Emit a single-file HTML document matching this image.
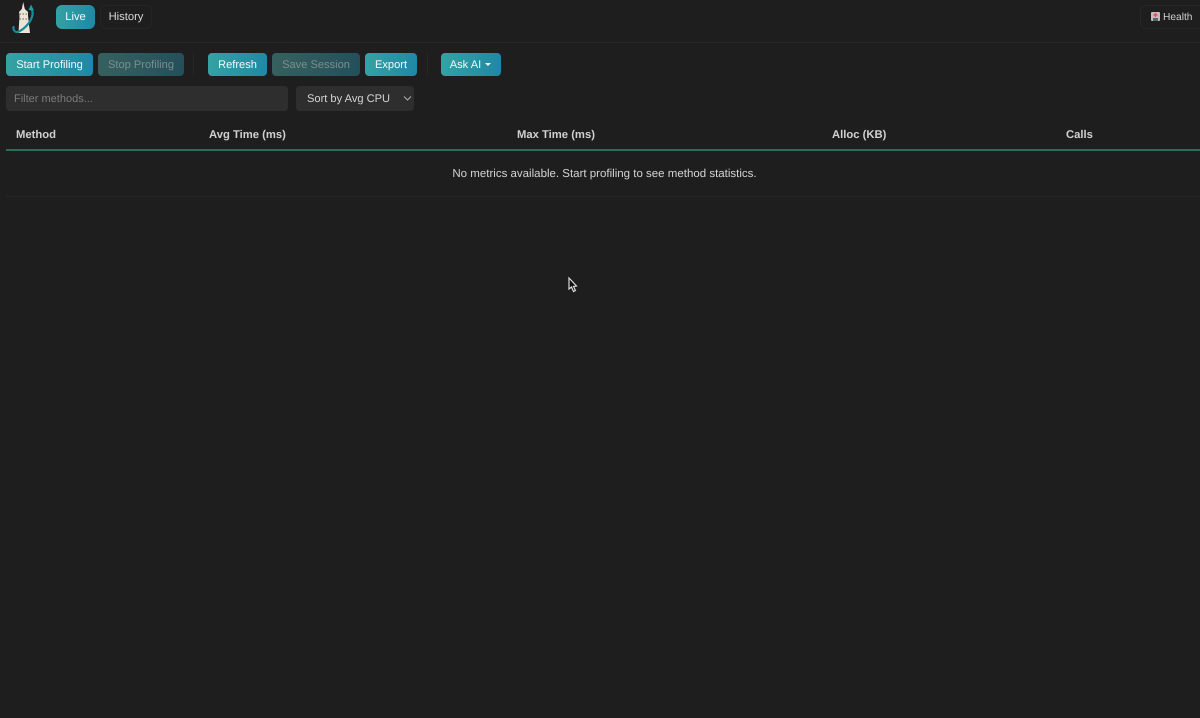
<!DOCTYPE html>
<html lang="en"><head><meta charset="utf-8"><title>Profiler</title>
<style>
html,body{margin:0;padding:0;width:1200px;height:718px;overflow:hidden;background:#1e1e1e;font-family:"Liberation Sans",sans-serif;color:#ddd;text-rendering:geometricPrecision}
#w{position:absolute;left:0;top:0;width:1200px;height:718px;overflow:hidden;filter:blur(.3px)}
.a{position:absolute;white-space:nowrap}
.btn{position:absolute;top:53px;height:23px;border-radius:4px;background:linear-gradient(100deg,#35a3a3,#1f87a5);color:#f4f8f8;font-size:11.1px;line-height:24px;text-align:center;}
.dis{background:linear-gradient(100deg,#37615f,#234f5c);color:#7d8d8d}
.sep{position:absolute;top:52px;width:1px;height:24px;background:#262626}
.th{position:absolute;top:128px;font-size:11.25px;font-weight:bold;color:#d0d0d0;line-height:14px}
</style></head><body><div id="w">
<div class="a" style="left:0;top:42px;width:1200px;height:1px;background:#272727"></div>
<svg class="a" style="left:10px;top:1px" width="28" height="36" viewBox="0 0 28 36">
<path d="M13.2 1 L14.8 8 L18 11 L18 15 L20 32 L8.5 32 L9.5 15 L9 11 L11.8 8 Z" fill="#ece4d8"/>
<path d="M9.5 13H17.5M9.5 18H18" stroke="#6a645b" stroke-width="1" stroke-dasharray="1.5 1.5" fill="none"/>
<path d="M3.5 26 C3 30 6 32 9 30.5 C15 27.5 21 21 22.5 14 C23 11 22.3 9.5 21.5 8" stroke="#168c99" stroke-width="2.2" fill="none" stroke-linecap="round"/>
<path d="M21 3.5 L24 9.5 L18.5 9 Z" fill="#1aa0a6"/>
</svg>
<div class="a" style="left:56px;top:5px;width:39px;height:24px;border-radius:6px;background:linear-gradient(100deg,#35a3a3,#1f87a5);color:#f4f8f8;font-size:11.2px;line-height:25px;text-align:center">Live</div>
<div class="a" style="left:100px;top:5px;width:52px;height:24px;box-sizing:border-box;border:1px solid #252525;border-radius:6px;color:#d8d8d8;font-size:11.2px;line-height:23px;text-align:center">History</div>
<div class="a" style="left:1140px;top:5px;width:70px;height:24px;box-sizing:border-box;border:1px solid #272727;border-radius:6px"></div>
<svg class="a" style="left:1150px;top:11px" width="11" height="11" viewBox="0 0 11 11">
<rect x="1" y="1" width="9" height="9" rx="1" fill="#c9b9bb"/><rect x="3" y="7" width="5" height="3" fill="#4e6870"/><path d="M5.5 2v4M3.5 4h4" stroke="#e8475f" stroke-width="1.4"/>
</svg>
<div class="a" style="left:1163px;top:11px;font-size:10.2px;line-height:14px;color:#cfcfcf">Health</div>
<div class="btn" style="left:6px;width:87px">Start Profiling</div>
<div class="btn dis" style="left:98px;width:86px">Stop Profiling</div>
<div class="sep" style="left:193px"></div>
<div class="btn" style="left:208px;width:59px">Refresh</div>
<div class="btn dis" style="left:272px;width:88px">Save Session</div>
<div class="btn" style="left:365px;width:52px">Export</div>
<div class="sep" style="left:427px"></div>
<div class="btn" style="left:441px;width:60px;text-indent:-1px">Ask AI <span style="display:inline-block;width:0;height:0;border:3px solid transparent;border-top-color:#f4f8f8;border-bottom:0;vertical-align:2px;margin-left:1px"></span></div>
<div class="a" style="left:6px;top:86px;width:282px;height:25px;border-radius:4px;background:#2e2e2e;color:#7c7c7c;font-size:11px;line-height:26px;text-indent:8px">Filter methods...</div>
<div class="a" style="left:296px;top:86px;width:118px;height:25px;border-radius:4px;background:#2e2e2e;color:#d4d4d4;font-size:11.1px;line-height:26px;text-indent:11px">Sort by Avg CPU</div>
<svg class="a" style="left:403px;top:95px" width="9" height="7" viewBox="0 0 9 7"><path d="M1 1.5L4.5 5L8 1.5" stroke="#aaa" stroke-width="1.1" fill="none"/></svg>
<div class="th" style="left:16px">Method</div>
<div class="th" style="left:209px">Avg Time (ms)</div>
<div class="th" style="left:517px">Max Time (ms)</div>
<div class="th" style="left:832px">Alloc (KB)</div>
<div class="th" style="left:1066px">Calls</div>
<div class="a" style="left:6px;top:149px;width:1194px;height:2px;background:#2c6a5e"></div>
<div class="a" style="left:6px;top:167px;width:1197px;text-align:center;font-size:11.5px;line-height:14px;color:#d4d4d4">No metrics available. Start profiling to see method statistics.</div>
<div class="a" style="left:6px;top:196px;width:1194px;height:1px;background:#272727"></div>
<svg class="a" style="left:566px;top:276px" width="14" height="18" viewBox="0 0 14 18">
<path d="M3 2 L3 13 L5.5 11 L7.5 15.5 L9.5 14.5 L7.5 10.5 L10.5 10 Z" fill="#111" stroke="#d8d8d8" stroke-width="1.2"/>
</svg>
</div></body></html>
